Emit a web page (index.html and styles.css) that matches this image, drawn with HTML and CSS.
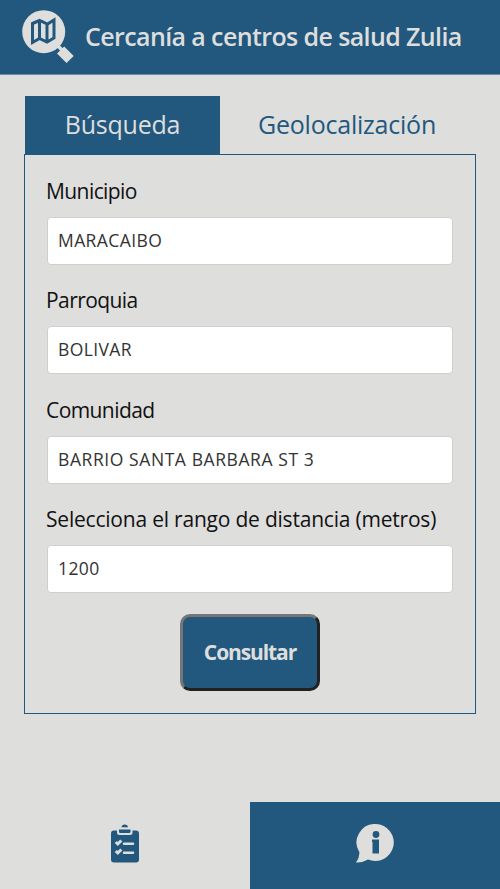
FILE: index.html
```
<!DOCTYPE html>
<html lang="es">
<head>
<meta charset="utf-8">
<title>Cercanía a centros de salud Zulia</title>
<link rel="stylesheet" href="styles.css">
</head>
<body>
<header class="header">
  <svg class="logo" viewBox="0 0 54 54">
    <circle cx="21.7" cy="21.7" r="21.5" fill="#dededd"/>
    <path d="M35 35l6 6" stroke="#dededd" stroke-width="3.500"/>
    <path d="M42.200 36.400l9.500 9.500-7.200 7.200-9.500-9.500z" fill="#dededd"/>
    <path d="M10.500 13.500l7-3 8 3.500 6.500-4V28l-7 4-7.500-3.500-7 4zM17.500 11v17M25 14v17" fill="none" stroke="#22587e" stroke-width="3"/>
  </svg>
  <h1 class="title">Cercanía a centros de salud Zulia</h1>
</header>
<main class="main">
  <nav class="tabs">
    <a class="tab tab-active">Búsqueda</a>
    <a class="tab tab-geo">Geolocalización</a>
  </nav>
  <form class="panel">
    <div class="field"><label class="label">Municipio</label><div class="control control-mun">MARACAIBO</div></div>
    <div class="field"><label class="label">Parroquia</label><div class="control control-mun">BOLIVAR</div></div>
    <div class="field"><label class="label">Comunidad</label><div class="control">BARRIO SANTA BARBARA ST 3</div></div>
    <div class="field"><label class="label label-long">Selecciona el rango de distancia (metros)</label><div class="control control-mun">1200</div></div>
    <button class="submit" type="button">Consultar</button>
  </form>
</main>
<footer class="footer">
  <a class="nav-item">
    <svg class="icon-list" viewBox="0 0 28 39">
      <rect x="0" y="6.500" width="28" height="32" rx="3" fill="#22587e"/>
      <path d="M6 5.500v3q0 2.500 2.500 2.500h10.500q2.500 0 2.500-2.500v-3z" fill="#dededd"/>
      <path d="M8 5.500h11.500v2.300q0 1.200-1.200 1.200H9.200q-1.200 0-1.200-1.200z" fill="#22587e"/>
      <path d="M10.500 3.200a3.300 3.200 0 0 1 6.500 0z" fill="#22587e"/>
      <path d="M4.800 18l2 2 3.500-3.500M4.800 27l2 2 3.500-3.500" fill="none" stroke="#dededd" stroke-width="3"/>
      <path d="M13 19.700h9M13 28.700h9" stroke="#dededd" stroke-width="2.500" stroke-linecap="round"/>
    </svg>
  </a>
  <a class="nav-item nav-info">
    <svg class="icon-info" viewBox="0 0 39 39">
      <path d="M20 0a18.500 18.500 0 1 1-8 35.500Q6 39 0 38.500q3.500-5 3.500-10A18.500 18.500 0 0 1 20 0z" fill="#dededd"/>
      <circle cx="20" cy="10.500" r="3.400" fill="#22587e"/>
      <path d="M16 15.500h7v14h-6.500V18h-.5z" fill="#22587e"/>
    </svg>
  </a>
</footer>
</body>
</html>
```

FILE: styles.css
```
* { box-sizing: border-box; }
body {
  margin: 0;
  height: 889px;
  display: flex;
  flex-direction: column;
  background: #dededd;
  color: #111;
  font-family: "Open Sans", "Noto Sans", sans-serif;
}
.header {
  height: 75px;
  display: flex;
  align-items: flex-start;
  padding: 10px 0 0 22px;
  background: #22587e;
  border-bottom: 1px solid #6c8ea8;
}
.logo { width: 54px; height: 54px; flex: none; }
.title {
  margin: 9px 0 0 9px;
  font-size: 25px;
  line-height: 34px;
  font-weight: 600;
  letter-spacing: -0.61px;
  color: #dededd;
  white-space: nowrap;
}
.main { flex: 1; padding: 21px 24px 0; }
.tabs { display: flex; height: 58px; padding-left: 1px; }
.tab {
  flex: 1;
  text-align: center;
  font-size: 25px;
  line-height: 56px;
  letter-spacing: -0.22px;
  color: #22587e;
}
.tab-active { flex: 0 0 195px; background: #22587e; color: #dededd; }
.tab-geo { padding-right: 2px; }
.panel {
  height: 560px;
  border: 1px solid #22587e;
  padding: 19px 22px 0;
  display: flex;
  flex-direction: column;
}
.field { height: 109.300px; }
.label {
  display: block;
  height: 43px;
  margin-left: -1px;
  font-size: 21px;
  line-height: 34px;
  letter-spacing: -0.58px;
}
.label-long { letter-spacing: -0.21px; }
.control {
  height: 48px;
  width: 406px;
  padding-left: 10px;
  background: #fff;
  border: 1px solid #cfcfcf;
  border-radius: 4px;
  font-size: 17.500px;
  line-height: 44px;
  letter-spacing: 0.58px;
  color: #333;
}
.control-mun { letter-spacing: 0.4px; }
.submit {
  align-self: center;
  width: 140px;
  height: 77px;
  margin-top: 3px;
  padding: 0 0 2px;
  background: #22587e;
  border: 3px solid;
  border-color: #767676 #212121 #212121 #767676;
  border-radius: 10px;
  color: #dededd;
  font: 700 21px "Open Sans", sans-serif;
  letter-spacing: -1.100px;
}
.footer { height: 87px; display: flex; }
.nav-item { flex: 1; display: flex; justify-content: center; align-items: flex-start; padding-top: 22px; }
.nav-info { background: #22587e; }
.icon-list { width: 28px; height: 39px; }
.icon-info { width: 39px; height: 39px; }
```
